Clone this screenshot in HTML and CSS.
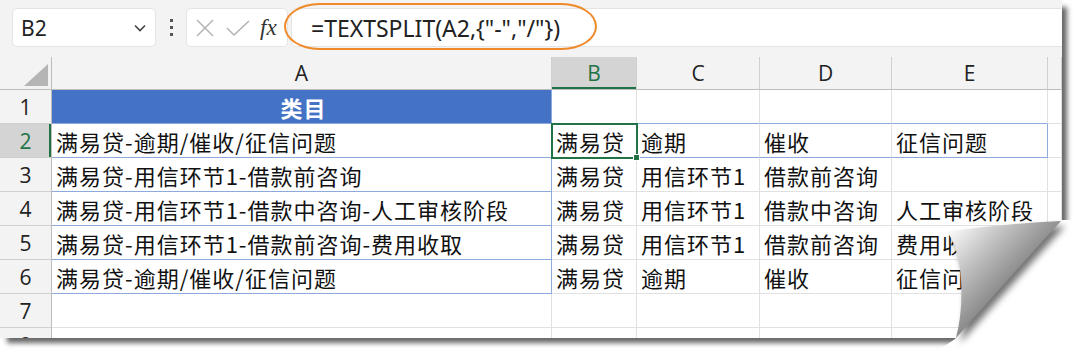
FILE: index.html
```html
<!DOCTYPE html>
<html lang="zh-CN">
<head>
  <meta charset="UTF-8">
  <meta name="viewport" content="width=device-width, initial-scale=1.0">
  <title>TEXTSPLIT</title>
  <link rel="stylesheet" href="styles.css">
</head>
<body>
  <div class="page">
    <div class="sheet">
      <div class="toolbar">
        <div class="namebox">
          <span>B2</span>
          <svg width="12" height="8" viewBox="0 0 12 8"><path d="M1 1.5l5 5 5-5" fill="none" stroke="#444" stroke-width="1.6"/></svg>
        </div>
        <div class="dots"><i></i><i></i><i></i></div>
        <div class="fxbox">
          <svg width="18" height="18" viewBox="0 0 18 18"><path d="M1 1l16 16M17 1L1 17" stroke="#b0b0b0" stroke-width="1.4"/></svg>
          <svg width="24" height="16" viewBox="0 0 24 16"><path d="M1 8l7 7L23 1" fill="none" stroke="#b0b0b0" stroke-width="1.4"/></svg>
          <span class="fx">fx</span>
        </div>
        <div class="formula">=TEXTSPLIT(A2,{"-","/"})</div>
        <div class="callout"></div>
      </div>

      <div class="grid">
        <div class="c h corner"><span class="tri"></span></div>
        <div class="c h">A</div>
        <div class="c h on-col">B</div>
        <div class="c h">C</div>
        <div class="c h">D</div>
        <div class="c h">E</div>
        <div class="c h"></div>

        <div class="c rh">1</div>
        <div class="c title">类目</div>
        <div class="c bb"></div>
        <div class="c bb"></div>
        <div class="c bb"></div>
        <div class="c bb"></div>
        <div class="c"></div>

        <div class="c rh on-row">2</div>
        <div class="c ab">满易贷-逾期/催收/征信问题</div>
        <div class="c bb sel">满易贷</div>
        <div class="c bb">逾期</div>
        <div class="c bb">催收</div>
        <div class="c bb br">征信问题</div>
        <div class="c"></div>

        <div class="c rh">3</div>
        <div class="c ab">满易贷-用信环节1-借款前咨询</div>
        <div class="c">满易贷</div>
        <div class="c">用信环节1</div>
        <div class="c">借款前咨询</div>
        <div class="c"></div>
        <div class="c"></div>

        <div class="c rh">4</div>
        <div class="c ab">满易贷-用信环节1-借款中咨询-人工审核阶段</div>
        <div class="c">满易贷</div>
        <div class="c">用信环节1</div>
        <div class="c">借款中咨询</div>
        <div class="c">人工审核阶段</div>
        <div class="c"></div>

        <div class="c rh">5</div>
        <div class="c ab">满易贷-用信环节1-借款前咨询-费用收取</div>
        <div class="c">满易贷</div>
        <div class="c">用信环节1</div>
        <div class="c">借款前咨询</div>
        <div class="c">费用收取</div>
        <div class="c"></div>

        <div class="c rh">6</div>
        <div class="c ab">满易贷-逾期/催收/征信问题</div>
        <div class="c">满易贷</div>
        <div class="c">逾期</div>
        <div class="c">催收</div>
        <div class="c">征信问题</div>
        <div class="c"></div>

        <div class="c rh">7</div>
        <div class="c"></div>
        <div class="c"></div>
        <div class="c"></div>
        <div class="c"></div>
        <div class="c"></div>
        <div class="c"></div>

        <div class="c rh">8</div>
        <div class="c"></div>
        <div class="c"></div>
        <div class="c"></div>
        <div class="c"></div>
        <div class="c"></div>
        <div class="c"></div>
      </div>
    </div>

    <!-- folded corner -->
    <svg class="curl" width="1080" height="356" viewBox="0 0 1080 356">
      <defs>
        <linearGradient id="flap" gradientUnits="userSpaceOnUse" x1="950" y1="236" x2="1004" y2="288">
          <stop offset="0" stop-color="#f4f4f4"/>
          <stop offset="0.45" stop-color="#c2c2c2"/>
          <stop offset="1" stop-color="#8a8a8a"/>
        </linearGradient>
        <filter id="soft" x="-30%" y="-30%" width="160%" height="160%">
          <feGaussianBlur stdDeviation="3.5"/>
        </filter>
      </defs>
      <polygon fill="#fff" points="1061,220 1080,220 1080,356 930,356 955,339"/>
      <path d="M947,232 Q1000,224 1061,221 Q1010,277 956,338 C966,300 962,250 947,232 Z" fill="#000" opacity="0.55" transform="translate(4 5)" filter="url(#soft)"/>
      <path d="M947,232 Q1000,224 1061,221 Q1010,277 956,338 C966,300 962,250 947,232 Z" fill="url(#flap)"/>
    </svg>
  </div>
</body>
</html>
```

FILE: styles.css
```css
body {
  margin: 0;
  background: #fff;
  font-family: "Noto Sans", "Noto Sans CJK SC", sans-serif;
}

.page {
  position: relative;
  width: 1080px;
  height: 356px;
  overflow: hidden;
}

.sheet {
  width: 1062px;
  height: 338px;
  background: #f3f3f3;
  box-shadow: 6px 6px 5px -1px rgba(0, 0, 0, 0.6);
  overflow: hidden;
}

/* formula bar */
.toolbar {
  position: relative;
  display: flex;
  height: 57px;
  box-sizing: border-box;
  padding: 8px 0 10px 12px;
}

.namebox {
  width: 144px;
  box-sizing: border-box;
  background: #fff;
  border: 1px solid #e4e4e4;
  border-radius: 5px;
  display: flex;
  align-items: center;
  justify-content: space-between;
  padding: 0 9px 0 8px;
  font-size: 21px;
  color: #222;
}

.dots {
  width: 30px;
  display: flex;
  flex-direction: column;
  align-items: center;
  justify-content: center;
  gap: 4px;
}

.dots i {
  width: 3px;
  height: 3px;
  background: #555;
}

.fxbox {
  width: 102px;
  box-sizing: border-box;
  background: #fff;
  border: 1px solid #e4e4e4;
  border-radius: 5px;
  display: flex;
  align-items: center;
  gap: 12px;
  padding-left: 9px;
}

.fx {
  font-family: "Liberation Serif", serif;
  font-style: italic;
  font-size: 23px;
  color: #333;
  margin-left: -2px;
}

.formula {
  flex: 1;
  margin-left: 3px;
  background: #fff;
  border: 1px solid #e4e4e4;
  border-right: none;
  border-radius: 5px 0 0 5px;
  padding-left: 19px;
  display: flex;
  align-items: center;
  font-size: 23px;
  color: #222;
}

.callout {
  position: absolute;
  left: 284px;
  top: 3px;
  width: 313px;
  height: 47px;
  box-sizing: border-box;
  border: 2px solid #ef8a2b;
  border-radius: 36px / 24px;
}

/* sheet grid */
.grid {
  display: grid;
  grid-template-columns: 52px 500px 85px 123px 132px 156px 14px;
  grid-template-rows: 33px repeat(8, 34px);
  background: #fff;
}

.c {
  box-sizing: border-box;
  border-right: 1px solid #e1e1e1;
  border-bottom: 1px solid #e1e1e1;
  padding-left: 4px;
  display: flex;
  align-items: center;
  white-space: nowrap;
  font-family: "Noto Sans CJK SC", sans-serif;
  font-size: 22px;
  letter-spacing: 1px;
  color: #111;
}

.h {
  background: #f3f3f3;
  justify-content: center;
  padding: 0;
  letter-spacing: 0;
  border-right-color: #cfcfcf;
  border-bottom-color: #bdbdbd;
  font-family: "Open Sans", sans-serif;
  font-size: 21px;
  color: #222;
}

.corner {
  position: relative;
  border-right-color: #bdbdbd;
}

.tri {
  position: absolute;
  right: 3px;
  bottom: 3px;
  width: 0;
  height: 0;
  border-left: 24px solid transparent;
  border-bottom: 22px solid #b5b5b5;
}

.rh {
  background: #f3f3f3;
  justify-content: center;
  padding: 0;
  letter-spacing: 0;
  border-right-color: #bdbdbd;
  border-bottom-color: #cfcfcf;
  font-family: "Open Sans", sans-serif;
  font-size: 21px;
  color: #222;
}

.on-col {
  background: #d4d4d4;
  color: #217346;
  box-shadow: inset 0 -2px 0 #217346;
}

.on-row {
  background: #d4d4d4;
  color: #217346;
  box-shadow: inset -2px 0 0 #217346;
}

.title {
  background: #4472c4;
  color: #fff;
  font-weight: bold;
  justify-content: center;
  border-right-color: #8eaadc;
  border-bottom-color: #8eaadc;
}

.ab {
  border-right-color: #8eaadc;
  border-bottom-color: #8eaadc;
}

.bb {
  border-bottom-color: #8eaadc;
}

.br {
  border-right-color: #8eaadc;
}

.sel {
  position: relative;
  outline: 2px solid #217346;
  outline-offset: -1px;
}

.sel::after {
  content: "";
  position: absolute;
  right: -4px;
  bottom: -4px;
  width: 5px;
  height: 5px;
  background: #217346;
  border: 1px solid #fff;
}

.curl {
  position: absolute;
  left: 0;
  top: 0;
  pointer-events: none;
}
```
